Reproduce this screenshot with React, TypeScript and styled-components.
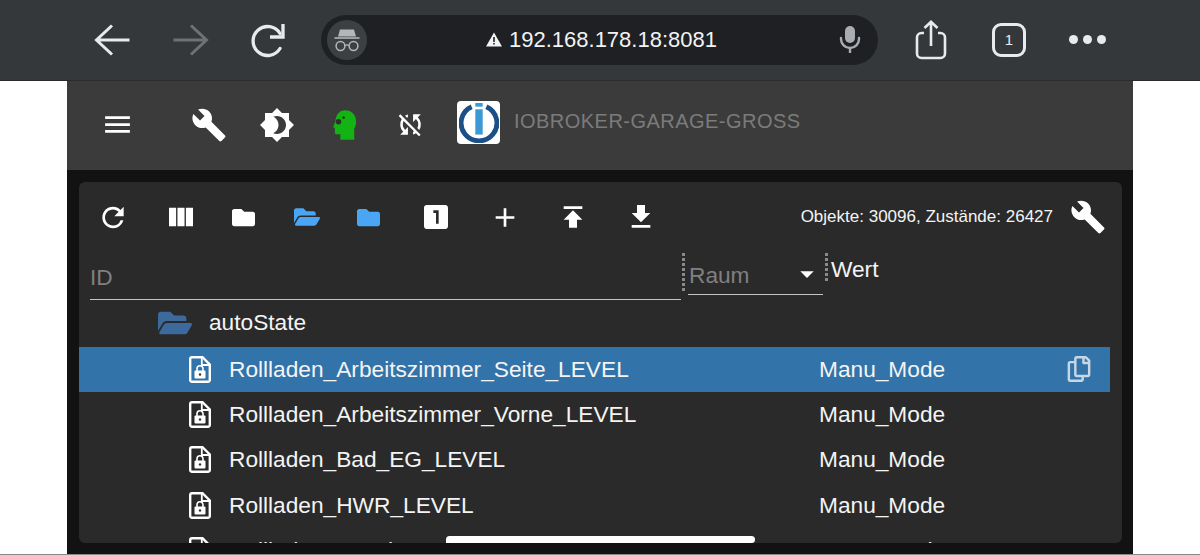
import styled, { createGlobalStyle } from "styled-components";
import {
  MdMenu,
  MdBuild,
  MdBrightness4,
  MdSyncDisabled,
  MdRefresh,
  MdViewColumn,
  MdLooksOne,
  MdAdd,
  MdPublish,
  MdGetApp,
  MdArrowDropDown,
} from "react-icons/md";
import { FaFolder, FaFolderOpen, FaRegCopy } from "react-icons/fa";

const GlobalStyle = createGlobalStyle`
  html, body {
    margin: 0;
    padding: 0;
    height: 555px;
    overflow: hidden;
    background: #fff;
    font-family: "Liberation Sans", Arial, sans-serif;
  }
`;

const Page = styled.div`
  position: relative;
  height: 555px;
  display: flex;
  flex-direction: column;
  box-sizing: border-box;
  border-bottom: 1px solid #8a8a8a;
`;

const BrowserBar = styled.div`
  flex: 0 0 81px;
  box-sizing: border-box;
  display: flex;
  align-items: center;
  padding: 0 0 1px 93px;
  background: #35383b;
  border-bottom: 1px solid #2a2b2d;
`;

const BarSlot = styled.div<{ $gap?: number; $color?: string }>`
  display: flex;
  align-items: center;
  justify-content: center;
  margin-left: ${(p) => p.$gap ?? 0}px;
  color: ${(p) => p.$color ?? "#e8eaed"};
`;

const UrlPill = styled.div`
  width: 557px;
  height: 50px;
  margin-left: 33px;
  padding: 0 17px 0 6px;
  box-sizing: border-box;
  display: flex;
  align-items: center;
  background: #1f2023;
  border-radius: 25px;
`;

const IncognitoBadge = styled.div`
  width: 40px;
  height: 40px;
  border-radius: 50%;
  background: #3d4043;
  display: flex;
  align-items: center;
  justify-content: center;
  color: #b4b6b9;
`;

const UrlText = styled.div`
  flex: 1;
  display: flex;
  align-items: center;
  justify-content: center;
  gap: 7px;
  padding-right: 3px;
  color: #f2f3f4;
  font-size: 22px;
`;

const TabCount = styled.div`
  width: 34px;
  height: 34px;
  box-sizing: border-box;
  border: 3px solid #e8eaed;
  border-radius: 9px;
  display: flex;
  align-items: center;
  justify-content: center;
  color: #e8eaed;
  font-size: 15px;
`;

const Dots = styled.div`
  display: flex;
  gap: 5px;
  > span {
    width: 9px;
    height: 9px;
    border-radius: 50%;
    background: #e8eaed;
  }
`;

const Shell = styled.div`
  flex: 1;
  min-height: 0;
  margin: 0 67px;
  display: flex;
  flex-direction: column;
  background: #121212;
`;

const AppHeader = styled.header`
  flex: 0 0 89px;
  box-sizing: border-box;
  padding-bottom: 2px;
  display: flex;
  align-items: center;
  background: #3b3b3b;
  color: #fff;
`;

const HeaderIcon = styled.div<{ $left: number; $color?: string }>`
  width: 36px;
  height: 36px;
  margin-left: ${(p) => p.$left}px;
  display: flex;
  align-items: center;
  justify-content: center;
  color: ${(p) => p.$color ?? "#fff"};
`;

const Logo = styled.div`
  width: 43px;
  height: 43px;
  margin: 0 0 4px 29px;
  background: #fff;
  border-radius: 4px;
  display: flex;
  align-items: center;
  justify-content: center;
`;

const Title = styled.div`
  margin: 0 0 6px 14px;
  color: #7b7b7b;
  font-size: 20px;
  letter-spacing: 0.47px;
  white-space: nowrap;
`;

const Panel = styled.section`
  flex: 1;
  min-height: 0;
  margin: 12px 11px 11px 11.5px;
  display: flex;
  flex-direction: column;
  background: #2a2a2a;
  border-radius: 6px;
  overflow: hidden;
  color: #fff;
`;

const Toolbar = styled.div`
  flex: 0 0 70px;
  display: flex;
  align-items: center;
  padding: 0 16px 0 18.5px;
`;

const ToolButton = styled.div<{ $gap?: number; $color?: string }>`
  width: 32px;
  height: 36px;
  margin-left: ${(p) => p.$gap ?? 0}px;
  display: flex;
  align-items: center;
  justify-content: center;
  color: ${(p) => p.$color ?? "#fff"};
`;

const Stats = styled.div`
  margin-left: auto;
  font-size: 17px;
  white-space: nowrap;
  color: #f4f4f4;
`;

const SettingsButton = styled.div`
  width: 36px;
  height: 36px;
  margin-left: 17px;
  display: flex;
  align-items: center;
  justify-content: center;
`;

const FilterRow = styled.div`
  flex: 0 0 49.5px;
  display: flex;
  align-items: flex-start;
  padding-left: 11.5px;
`;

const IdField = styled.div`
  width: 591px;
  height: 48px;
  box-sizing: border-box;
  padding: 12px 0 0 0;
  border-bottom: 1.5px solid #c4c4c4;
  color: #808080;
  font-size: 22.7px;
`;

const ColumnHandle = styled.div<{ $height: number; $side: number }>`
  width: 3px;
  height: ${(p) => p.$height}px;
  margin: 1px ${(p) => p.$side}px 0;
  background-image: linear-gradient(#8a8a8a 60%, transparent 60%);
  background-size: 3px 5px;
`;

const RoomField = styled.div`
  width: 135px;
  height: 43px;
  margin-left: 2px;
  box-sizing: border-box;
  padding: 10px 0 0 1px;
  border-bottom: 1.5px solid #c4c4c4;
  display: flex;
  align-items: flex-start;
  justify-content: space-between;
  color: #808080;
  font-size: 22.7px;
  > svg {
    color: #fff;
    margin-top: -4px;
  }
`;

const ValueHead = styled.div`
  padding: 4px 0 0 1px;
  font-size: 22.7px;
  color: #f4f4f4;
`;

const ObjectRow = styled.div<{ $selected?: boolean; $lift?: number }>`
  flex: 0 0 45.4px;
  box-sizing: border-box;
  margin-right: 12px;
  padding-bottom: ${(p) => p.$lift ?? 1}px;
  display: grid;
  grid-template-columns: 740.5px 1fr 44px;
  align-items: center;
  font-size: 22.7px;
  color: #f4f4f4;
  background: ${(p) => (p.$selected ? "#3273aa" : "transparent")};
`;

const NameCell = styled.div<{ $indent: number }>`
  display: flex;
  align-items: center;
  padding-left: ${(p) => p.$indent}px;
  white-space: nowrap;
`;

const FolderSlot = styled.div`
  width: 51px;
  display: flex;
  color: #3d6a9c;
`;

const FileSlot = styled.div`
  width: 40px;
  display: flex;
`;

const CopyCell = styled.div`
  color: #c6d7e6;
  display: flex;
`;

const HomeIndicator = styled.div`
  position: absolute;
  left: 446px;
  top: 536px;
  width: 309px;
  height: 7px;
  border-radius: 4px 4px 4px 0;
  background: #fff;
`;

const BackIcon = ({ flip }: { flip?: boolean }) => (
  <svg width="40" height="34" viewBox="0 0 40 34" style={flip ? { transform: "scaleX(-1)" } : undefined}>
    <path d="M3.5 17H36.5M19 2.5L3.5 17L19 31.5" fill="none" stroke="currentColor" strokeWidth="3" />
  </svg>
);

const ReloadIcon = () => (
  <svg width="40" height="36" viewBox="0 0 40 36">
    <path d="M32 11.5A14.5 14.5 0 1 0 32 26.5" fill="none" stroke="currentColor" strokeWidth="3.3" strokeLinecap="round" />
    <path d="M35 2V15H22" fill="none" stroke="currentColor" strokeWidth="3.3" />
  </svg>
);

const IncognitoIcon = () => (
  <svg width="30" height="26" viewBox="0 0 30 26">
    <path d="M8 2.5H22L24 9.5H6Z" fill="currentColor" />
    <path d="M2.5 11H27.5" stroke="currentColor" strokeWidth="1.6" />
    <circle cx="8.5" cy="19" r="4.4" fill="none" stroke="currentColor" strokeWidth="1.5" />
    <circle cx="21.5" cy="19" r="4.4" fill="none" stroke="currentColor" strokeWidth="1.5" />
    <path d="M13 18.5Q15 17.2 17 18.5" fill="none" stroke="currentColor" strokeWidth="1.4" />
  </svg>
);

const WarningIcon = () => (
  <svg width="16" height="15" viewBox="0 0 16 15">
    <path d="M8 0.5L16 14.5H0Z" fill="#f2f3f4" />
    <path d="M7.2 5H8.8V10H7.2ZM7.2 11H8.8V12.6H7.2Z" fill="#1f2023" />
  </svg>
);

const MicIcon = () => (
  <svg width="22" height="27" viewBox="0 0 22 27" fill="#a9acb0">
    <rect x="6" y="0" width="10" height="17" rx="5" />
    <path d="M2 12V13A9 9 0 0 0 20 13V12" fill="none" stroke="#a9acb0" strokeWidth="2.4" strokeLinecap="round" />
    <rect x="9.8" y="21" width="2.4" height="6" />
  </svg>
);

const ShareIcon = () => (
  <svg width="32" height="40" viewBox="0 0 32 40" fill="none" stroke="#e8eaed" strokeWidth="2.6">
    <path d="M9 13H6.5A4.5 4.5 0 0 0 2 17.5V33.5A4.5 4.5 0 0 0 6.5 38H25.5A4.5 4.5 0 0 0 30 33.5V17.5A4.5 4.5 0 0 0 25.5 13H23" />
    <path d="M16 26V2M9.5 8L16 1.8L22.5 8" />
  </svg>
);

const HeadIcon = () => (
  <svg width="24" height="30" viewBox="0 0 26 32">
    <path
      d="M13 0C20 0 25 5 25 12C25 16 24 18 23 20V32H8V26H4C3 26 2 25 2 24V19L0 18.5L2.5 12.5C3 5 7 0 13 0Z"
      fill="#12b312"
    />
    <circle cx="6" cy="12.5" r="3" fill="#2f2f2f" />
    <path d="M10 8H13M11.5 6.5V9.5" stroke="#2f2f2f" strokeWidth="1.2" />
  </svg>
);

const IoBrokerLogo = () => (
  <svg width="40" height="40" viewBox="0 0 38 38">
    <path d="M12 3.5A17 17 0 1 0 26 3.5" fill="none" stroke="#1b4f86" strokeWidth="4.6" />
    <rect x="15.5" y="0" width="7" height="3.5" fill="#3b9ad6" />
    <rect x="15.5" y="6" width="7" height="24" fill="#3b9ad6" />
  </svg>
);

const FileLockIcon = () => (
  <svg width="22" height="27" viewBox="0 0 22 27">
    <path
      d="M3 1.2H13.5L20.8 8.5V24A1.8 1.8 0 0 1 19 25.8H3A1.8 1.8 0 0 1 1.2 24V3A1.8 1.8 0 0 1 3 1.2Z"
      fill="none"
      stroke="#fff"
      strokeWidth="2.4"
    />
    <path d="M12.8 1.5V9H20.5" fill="none" stroke="#fff" strokeWidth="1.8" />
    <rect x="5.5" y="14.5" width="11" height="8" rx="1" fill="#fff" />
    <path d="M8 15V12.8A3 3 0 0 1 14 12.8V15" fill="none" stroke="#fff" strokeWidth="1.6" />
    <circle cx="11" cy="18.5" r="1.2" fill="#333" />
  </svg>
);

const lockedStates = [
  "Rollladen_Arbeitszimmer_Seite_LEVEL",
  "Rollladen_Arbeitszimmer_Vorne_LEVEL",
  "Rollladen_Bad_EG_LEVEL",
  "Rollladen_HWR_LEVEL",
  "Rollladen_Kueche_LEVEL",
];

export default function App() {
  return (
    <Page>
      <GlobalStyle />
      <BrowserBar>
        <BarSlot><BackIcon /></BarSlot>
        <BarSlot $gap={37} $color="#6f7173"><BackIcon flip /></BarSlot>
        <BarSlot $gap={38}><ReloadIcon /></BarSlot>
        <UrlPill>
          <IncognitoBadge><IncognitoIcon /></IncognitoBadge>
          <UrlText>
            <WarningIcon />
            192.168.178.18:8081
          </UrlText>
          <MicIcon />
        </UrlPill>
        <BarSlot $gap={37}><ShareIcon /></BarSlot>
        <BarSlot $gap={45}><TabCount>1</TabCount></BarSlot>
        <BarSlot $gap={43}><Dots><span /><span /><span /></Dots></BarSlot>
      </BrowserBar>

      <Shell>
        <AppHeader>
          <HeaderIcon $left={32}><MdMenu size={33} /></HeaderIcon>
          <HeaderIcon $left={56}><MdBuild size={38} /></HeaderIcon>
          <HeaderIcon $left={32}><MdBrightness4 size={36} /></HeaderIcon>
          <HeaderIcon $left={32}><HeadIcon /></HeaderIcon>
          <HeaderIcon $left={29}><MdSyncDisabled size={31} /></HeaderIcon>
          <Logo><IoBrokerLogo /></Logo>
          <Title>IOBROKER-GARAGE-GROSS</Title>
        </AppHeader>

        <Panel>
          <Toolbar>
            <ToolButton><MdRefresh size={33} /></ToolButton>
            <ToolButton $gap={36}><MdViewColumn size={34} /></ToolButton>
            <ToolButton $gap={30}><FaFolder size={23} /></ToolButton>
            <ToolButton $gap={32} $color="#4aa6f5"><FaFolderOpen size={26} /></ToolButton>
            <ToolButton $gap={29} $color="#4aa6f5"><FaFolder size={23} /></ToolButton>
            <ToolButton $gap={36}><MdLooksOne size={32} /></ToolButton>
            <ToolButton $gap={37}><MdAdd size={33} /></ToolButton>
            <ToolButton $gap={36}><MdPublish size={34} /></ToolButton>
            <ToolButton $gap={36}><MdGetApp size={34} /></ToolButton>
            <Stats>Objekte: 30096, Zustände: 26427</Stats>
            <SettingsButton><MdBuild size={38} /></SettingsButton>
          </Toolbar>

          <FilterRow>
            <IdField>ID</IdField>
            <ColumnHandle $height={40} $side={1} />
            <RoomField>
              Raum
              <MdArrowDropDown size={32} />
            </RoomField>
            <ColumnHandle $height={30} $side={2} />
            <ValueHead>Wert</ValueHead>
          </FilterRow>

          <ObjectRow $lift={3}>
            <NameCell $indent={79.5}>
              <FolderSlot><FaFolderOpen size={34} /></FolderSlot>
              autoState
            </NameCell>
          </ObjectRow>
          {lockedStates.map((name, i) => (
            <ObjectRow key={name} $selected={i === 0}>
              <NameCell $indent={110.5}>
                <FileSlot><FileLockIcon /></FileSlot>
                {name}
              </NameCell>
              <div>Manu_Mode</div>
              {i === 0 && <CopyCell><FaRegCopy size={26} /></CopyCell>}
            </ObjectRow>
          ))}
        </Panel>
      </Shell>
      <HomeIndicator />
    </Page>
  );
}
